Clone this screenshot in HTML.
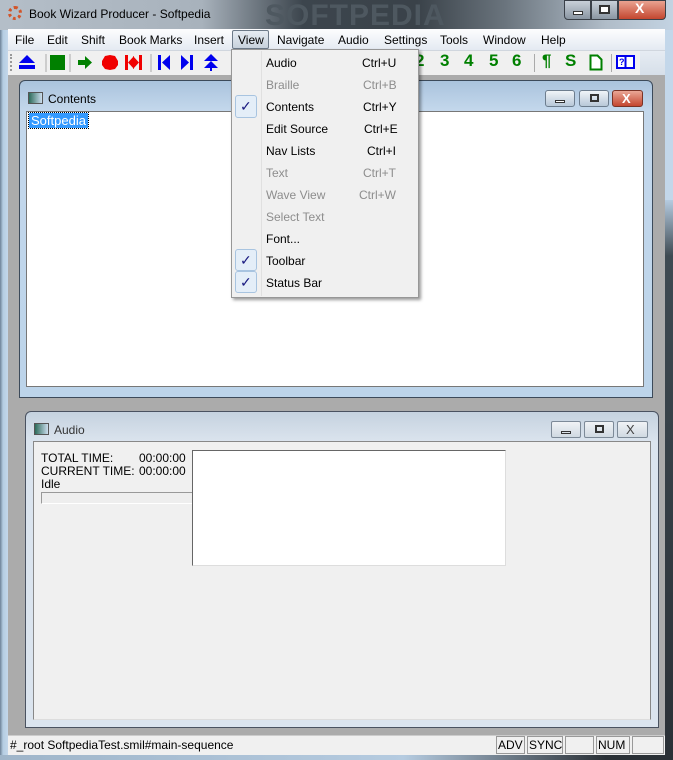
<!DOCTYPE html>
<html><head><meta charset="utf-8"><style>
*{margin:0;padding:0;box-sizing:border-box}
body{width:673px;height:760px;overflow:hidden;position:relative;background:#b9cfe3;font-family:"Liberation Sans",sans-serif;font-size:12px;color:#000}
.abs{position:absolute}
.t{position:absolute;white-space:nowrap}
</style></head><body>
<!-- outer frame -->
<div class="abs" style="left:0;top:0;width:673px;height:760px;background:linear-gradient(90deg,#6d8297 0,#b5cde2 3px,#c3d7ea 8px,#c3d7ea 100%)"></div>
<div class="abs" style="left:665px;top:200px;width:8px;height:560px;background:linear-gradient(180deg,#b5cbe0 0,#3e4a52 10%,#2a3036 100%)"></div>
<div class="abs" style="left:0;top:755px;width:673px;height:5px;background:linear-gradient(90deg,#9fb5c9 0,#b5cbe0 60%,#2a3036 90%)"></div>
<!-- title bar -->
<div class="abs" style="left:0;top:0;width:673px;height:30px;background:linear-gradient(90deg,#b4bec8 0,#a8b2bc 30%,#3c454d 45%,#3a4249 62%,#6a747d 75%,#b0bcc8 90%,#c3d3e2 100%)"></div>
<div class="t" style="left:265px;top:-1px;font-size:30px;font-weight:bold;color:#4e5860;letter-spacing:1px">SOFTPEDIA</div>
<div class="t" style="left:8px;top:6px;width:14px;height:14px;border-radius:50%;border:3px dotted #d2552a"></div>
<div class="t" style="left:29px;top:7px;font-size:12px;color:#000">Book Wizard Producer - Softpedia</div>
<div class="abs" style="left:564px;top:0;width:27px;height:20px;border:1px solid #3a4048;border-radius:0 0 0 4px;background:linear-gradient(#c8d0d8,#8a96a2)"></div>
<div class="abs" style="left:573px;top:11px;width:10px;height:4px;background:#fff;border:1px solid #333"></div>
<div class="abs" style="left:591px;top:0;width:27px;height:20px;border:1px solid #3a4048;background:linear-gradient(#c8d0d8,#8a96a2)"></div>
<div class="abs" style="left:599px;top:5px;width:11px;height:9px;border:2px solid #333;background:#fff"></div>
<div class="abs" style="left:618px;top:0;width:48px;height:20px;border:1px solid #3a4048;border-radius:0 0 4px 0;background:linear-gradient(#e9a391,#c4462f)"></div>
<div class="t" style="left:635px;top:0px;color:#fff;font-weight:bold;font-size:14px">X</div>
<!-- menubar -->
<div class="abs" style="left:8px;top:29px;width:657px;height:21px;background:linear-gradient(#fdfdfe,#e4eaf2)"></div>
<div class="t" style="left:15px;top:33px">File</div>
<div class="t" style="left:47px;top:33px">Edit</div>
<div class="t" style="left:81px;top:33px">Shift</div>
<div class="t" style="left:119px;top:33px">Book Marks</div>
<div class="t" style="left:194px;top:33px">Insert</div>
<div class="abs" style="left:232px;top:30px;width:37px;height:19px;border:1px solid #6d7a88;border-radius:2px;background:linear-gradient(#e6ecf2,#c8d2dc)"></div>
<div class="t" style="left:238px;top:33px">View</div>
<div class="t" style="left:277px;top:33px">Navigate</div>
<div class="t" style="left:338px;top:33px">Audio</div>
<div class="t" style="left:384px;top:33px">Settings</div>
<div class="t" style="left:440px;top:33px">Tools</div>
<div class="t" style="left:483px;top:33px">Window</div>
<div class="t" style="left:541px;top:33px">Help</div>
<!-- toolbar -->
<div class="abs" style="left:8px;top:50px;width:657px;height:25px;background:linear-gradient(#e6ecf3,#d6dfe9);border-top:1px solid #d0d6de"></div>
<div class="abs" style="left:8px;top:51px;width:632px;height:24px;background:#f0f0f0"></div>
<div class="abs" style="left:10px;top:54px;width:2px;height:17px;border-left:2px dotted #999"></div>
<svg class="abs" style="left:14px;top:52px" width="480" height="22">
<polygon points="5,11 13,3 21,11" fill="#0000ee"/><rect x="5" y="13" width="16" height="4" fill="#0000ee"/>
<line x1="32" y1="2" x2="32" y2="20" stroke="#aaa"/>
<rect x="36" y="3" width="15" height="15" fill="#008000"/>
<line x1="56" y1="2" x2="56" y2="20" stroke="#aaa"/>
<rect x="64" y="8" width="7" height="5" fill="#008000"/><polygon points="71,4 78,10.5 71,17" fill="#008000"/>
<polygon points="91,4 96,3 101,4 104,9 104,13 101,17 96,18 91,17 88,13 88,9" fill="#f00000"/>
<rect x="111" y="3" width="3" height="15" fill="#f00000"/><rect x="125" y="3" width="3" height="15" fill="#f00000"/><polygon points="114,10.5 120,4 120,17" fill="#f00000"/><polygon points="125,10.5 119,4 119,17" fill="#f00000"/>
<line x1="137" y1="2" x2="137" y2="20" stroke="#aaa"/>
<rect x="144" y="3" width="3" height="15" fill="#0000ee"/><polygon points="156,3 148,10.5 156,18" fill="#0000ee"/>
<polygon points="167,3 175,10.5 167,18" fill="#0000ee"/><rect x="176" y="3" width="3" height="15" fill="#0000ee"/>
<polygon points="190,9 197,2 204,9" fill="#0000ee"/><polygon points="190,16 197,9 204,16" fill="#0000ee"/><rect x="196" y="14" width="2" height="5" fill="#0000ee"/>
</svg>
<div class="t" style="left:415px;top:51px;font-size:17px;font-weight:bold;color:#008000">2</div>
<div class="t" style="left:440px;top:51px;font-size:17px;font-weight:bold;color:#008000">3</div>
<div class="t" style="left:464px;top:51px;font-size:17px;font-weight:bold;color:#008000">4</div>
<div class="t" style="left:489px;top:51px;font-size:17px;font-weight:bold;color:#008000">5</div>
<div class="t" style="left:512px;top:51px;font-size:17px;font-weight:bold;color:#008000">6</div>
<div class="abs" style="left:534px;top:54px;width:1px;height:18px;background:#aaa"></div>
<div class="t" style="left:542px;top:51px;font-size:17px;font-weight:bold;color:#008000">¶</div>
<div class="t" style="left:565px;top:51px;font-size:17px;font-weight:bold;color:#008000">S</div>
<svg class="abs" style="left:589px;top:54px" width="16" height="18"><path d="M1.5 1.5h7l4 4v10h-11z" fill="#fff" stroke="#008000" stroke-width="2"/></svg>
<div class="abs" style="left:611px;top:54px;width:1px;height:18px;background:#aaa"></div>
<svg class="abs" style="left:616px;top:54px" width="20" height="17"><rect x="1" y="2" width="17" height="12" fill="#fff" stroke="#0000ee" stroke-width="2"/><line x1="9.5" y1="2" x2="9.5" y2="14" stroke="#0000ee" stroke-width="2"/><text x="3" y="11" font-size="9" font-weight="bold" fill="#0000ee" font-family="Liberation Sans">?</text></svg>
<!-- MDI area -->
<div class="abs" style="left:8px;top:75px;width:657px;height:660px;background:#ababab"></div>
<!-- Contents window -->
<div class="abs" style="left:19px;top:80px;width:634px;height:318px;border:1px solid #3c4a5a;border-radius:6px 6px 0 0;background:linear-gradient(#aac3dd 0,#c4d8ec 30px,#bcd4ea 100%)"></div>
<div class="abs" style="left:28px;top:92px;width:15px;height:12px;border:1px solid #555;background:linear-gradient(90deg,#2d6b5a,#cde)"></div>
<div class="t" style="left:48px;top:92px">Contents</div>
<div class="abs" style="left:545px;top:90px;width:30px;height:17px;border:1px solid #6d7d8e;border-radius:3px;background:linear-gradient(#f0f4f8,#b8c8d8)"></div>
<div class="abs" style="left:555px;top:100px;width:10px;height:3px;border:1px solid #333;background:#fff"></div>
<div class="abs" style="left:579px;top:90px;width:30px;height:17px;border:1px solid #6d7d8e;border-radius:3px;background:linear-gradient(#f0f4f8,#b8c8d8)"></div>
<div class="abs" style="left:590px;top:94px;width:9px;height:8px;border:2px solid #333"></div>
<div class="abs" style="left:612px;top:90px;width:31px;height:17px;border:1px solid #7a3326;border-radius:3px;background:linear-gradient(#eaa796,#c4462f)"></div>
<div class="t" style="left:622px;top:91px;color:#fff;font-weight:bold;font-size:13px">X</div>
<div class="abs" style="left:26px;top:111px;width:618px;height:276px;background:#fff;border:1px solid #777"></div>
<div class="t" style="left:29px;top:113px;background:#3399ff;color:#fff;font-size:13px;padding:0 2px;outline:1px dotted #000">Softpedia</div>
<!-- Audio window -->
<div class="abs" style="left:25px;top:411px;width:634px;height:317px;border:1px solid #4a5260;border-radius:6px 6px 0 0;background:linear-gradient(#c5d2df 0,#dbe4ee 30px,#dbe4ee 100%)"></div>
<div class="abs" style="left:34px;top:423px;width:15px;height:12px;border:1px solid #555;background:linear-gradient(90deg,#2d6b5a,#cde)"></div>
<div class="t" style="left:54px;top:423px;color:#333">Audio</div>
<div class="abs" style="left:551px;top:421px;width:30px;height:17px;border:1px solid #7d8a98;border-radius:2px;background:linear-gradient(#f0f3f6,#d0d9e2)"></div>
<div class="abs" style="left:561px;top:431px;width:10px;height:3px;border:1px solid #333"></div>
<div class="abs" style="left:584px;top:421px;width:30px;height:17px;border:1px solid #7d8a98;border-radius:2px;background:linear-gradient(#f0f3f6,#d0d9e2)"></div>
<div class="abs" style="left:595px;top:425px;width:9px;height:8px;border:2px solid #333"></div>
<div class="abs" style="left:617px;top:421px;width:31px;height:17px;border:1px solid #7d8a98;border-radius:2px;background:linear-gradient(#f0f3f6,#d0d9e2)"></div>
<div class="t" style="left:626px;top:422px;color:#444;font-size:13px">X</div>
<div class="abs" style="left:33px;top:441px;width:618px;height:279px;background:#f0f0f0;border:1px solid #888;border-bottom-color:#ddd"></div>
<div class="t" style="left:41px;top:451px">TOTAL TIME:</div>
<div class="t" style="left:139px;top:451px">00:00:00</div>
<div class="t" style="left:41px;top:464px">CURRENT TIME:</div>
<div class="t" style="left:139px;top:464px">00:00:00</div>
<div class="t" style="left:41px;top:477px">Idle</div>
<div class="abs" style="left:41px;top:492px;width:152px;height:12px;border:1px solid #999;border-right:none;border-bottom-color:#fff;background:#eee"></div>
<div class="abs" style="left:192px;top:450px;width:314px;height:116px;background:#fff;border:1px solid #666;border-right-color:#ddd;border-bottom-color:#ddd"></div>
<!-- status bar -->
<div class="abs" style="left:8px;top:735px;width:657px;height:20px;background:#f0f0f0;border-top:1px solid #ccc"></div>
<div class="t" style="left:10px;top:738px">#_root SoftpediaTest.smil#main-sequence</div>
<div class="abs" style="left:496px;top:736px;width:29px;height:18px;border:1px solid #999"></div><div class="t" style="left:498px;top:738px">ADV</div>
<div class="abs" style="left:527px;top:736px;width:36px;height:18px;border:1px solid #999"></div><div class="t" style="left:529px;top:738px">SYNC</div>
<div class="abs" style="left:565px;top:736px;width:29px;height:18px;border:1px solid #999"></div>
<div class="abs" style="left:596px;top:736px;width:34px;height:18px;border:1px solid #999"></div><div class="t" style="left:598px;top:738px">NUM</div>
<div class="abs" style="left:632px;top:736px;width:32px;height:18px;border:1px solid #999"></div>
<!-- View menu dropdown -->
<div class="abs" style="left:231px;top:49px;width:188px;height:249px;background:#f0f0f0;border:1px solid #979797;box-shadow:2px 2px 3px rgba(0,0,0,.4)"></div>
<div class="abs" style="left:261px;top:51px;width:1px;height:245px;background:#e0e0e0"></div>
<div class="abs" style="left:235px;top:95px;width:22px;height:23px;border:1px solid #a8c4e0;border-radius:3px;background:#e4eef8"></div>
<div class="abs" style="left:235px;top:249px;width:22px;height:22px;border:1px solid #a8c4e0;border-radius:3px;background:#e4eef8"></div>
<div class="abs" style="left:235px;top:271px;width:22px;height:22px;border:1px solid #a8c4e0;border-radius:3px;background:#e4eef8"></div>
<div class="t" style="left:240px;top:98px;color:#1a1a80;font-size:14px">✓</div>
<div class="t" style="left:240px;top:252px;color:#1a1a80;font-size:14px">✓</div>
<div class="t" style="left:240px;top:274px;color:#1a1a80;font-size:14px">✓</div>
<div class="t" style="left:266px;top:56px">Audio</div><div class="t" style="left:362px;top:56px">Ctrl+U</div>
<div class="t" style="left:266px;top:78px;color:#8d8d8d">Braille</div><div class="t" style="left:363px;top:78px;color:#8d8d8d">Ctrl+B</div>
<div class="t" style="left:266px;top:100px">Contents</div><div class="t" style="left:363px;top:100px">Ctrl+Y</div>
<div class="t" style="left:266px;top:122px">Edit Source</div><div class="t" style="left:364px;top:122px">Ctrl+E</div>
<div class="t" style="left:266px;top:144px">Nav Lists</div><div class="t" style="left:367px;top:144px">Ctrl+I</div>
<div class="t" style="left:266px;top:166px;color:#8d8d8d">Text</div><div class="t" style="left:363px;top:166px;color:#8d8d8d">Ctrl+T</div>
<div class="t" style="left:266px;top:188px;color:#8d8d8d">Wave View</div><div class="t" style="left:359px;top:188px;color:#8d8d8d">Ctrl+W</div>
<div class="t" style="left:266px;top:210px;color:#8d8d8d">Select Text</div>
<div class="t" style="left:266px;top:232px">Font...</div>
<div class="t" style="left:266px;top:254px">Toolbar</div>
<div class="t" style="left:266px;top:276px">Status Bar</div>
</body></html>
